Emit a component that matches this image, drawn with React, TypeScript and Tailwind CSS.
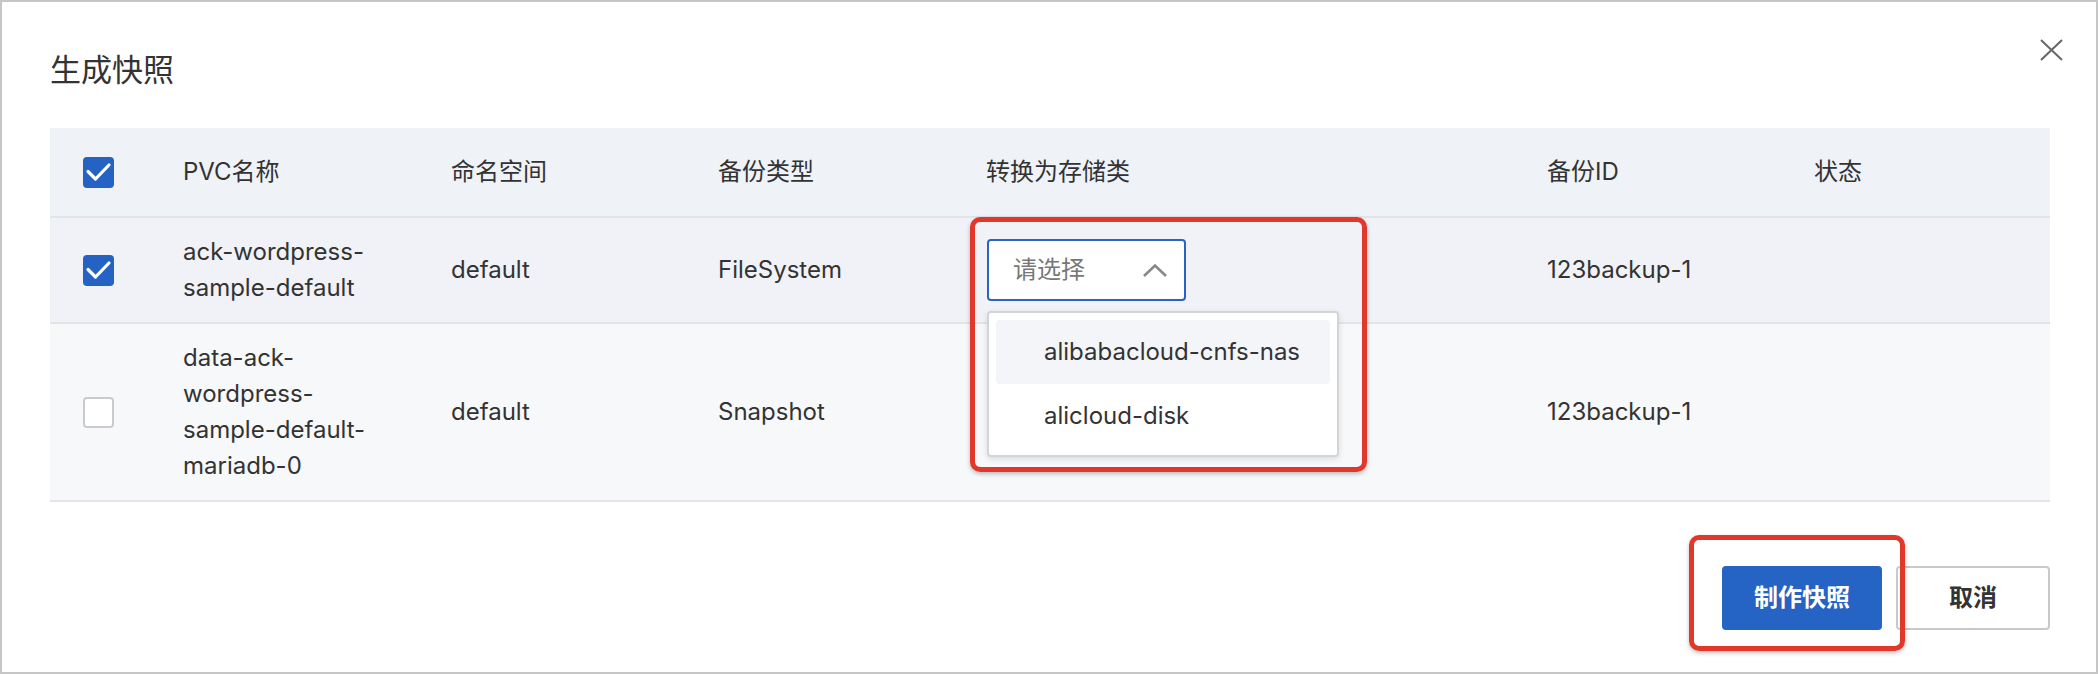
import React from 'react';

// Table rows for the snapshot dialog
interface PvcRow {
  name: string;
  namespace: string;
  type: string;
  backupId: string;
  checked: boolean;
}

const rows: PvcRow[] = [
  { name: 'ack-wordpress-sample-default', namespace: 'default', type: 'FileSystem', backupId: '123backup-1', checked: true },
  { name: 'data-ack-wordpress-sample-default-mariadb-0', namespace: 'default', type: 'Snapshot', backupId: '123backup-1', checked: false },
];

const gridCols = 'grid grid-cols-[133px_268px_267px_268px_561px_267px_236px]';

const Checkbox: React.FC<{ checked: boolean }> = ({ checked }) =>
  checked ? (
    <div className="w-[31px] h-[31px] rounded-[4px] bg-[#2462c4] flex items-center justify-center">
      <svg width="31" height="31" viewBox="0 0 31 31" fill="none">
        <path d="M5 14.5 L12.5 22 L26 8" stroke="white" strokeWidth="3.2" strokeLinecap="round" strokeLinejoin="round" />
      </svg>
    </div>
  ) : (
    <div className="w-[31px] h-[31px] rounded-[4px] border-2 border-[#c9cbd0] bg-white" />
  );

const App: React.FC = () => {
  return (
    <div
      className="relative w-[2098px] h-[674px] bg-white border-2 border-[#c6c6c6] pt-[48px] pl-[48px] pr-[46px] text-[#333]"
      style={{ fontFamily: 'Inter, "Noto Sans CJK SC", sans-serif' }}
    >
      <h1 className="text-[31px] leading-[40px] font-normal text-[#333]">生成快照</h1>

      <svg className="absolute left-[2037px] top-[36px]" width="25" height="24" viewBox="0 0 25 24" fill="none">
        <path d="M2 2 L23 22 M23 2 L2 22" stroke="#666" strokeWidth="2" />
      </svg>

      {/* table */}
      <div className="mt-[38px] text-[24px]">
        <div className={`${gridCols} h-[90px] bg-[#eff2f7] border-b-2 border-[#e2e4e8] items-center`}>
          <div className="pl-[33px] flex items-center"><Checkbox checked /></div>
          <div>PVC名称</div>
          <div>命名空间</div>
          <div>备份类型</div>
          <div>转换为存储类</div>
          <div>备份ID</div>
          <div>状态</div>
        </div>

        {rows.map((row, index) => (
          <div
            key={index}
            className={`${gridCols} py-[16px] leading-[36px] border-b-2 border-[#e2e4e8] items-center ${index === 0 ? 'bg-[#f0f2f7]' : 'bg-[#f7f8fa]'}`}
          >
            <div className="pl-[33px] flex items-center"><Checkbox checked={row.checked} /></div>
            <div className="w-[215px]">{row.name}</div>
            <div>{row.namespace}</div>
            <div>{row.type}</div>
            <div>
              {index === 0 && (
                <div className="relative ml-[1px] w-[199px] h-[62px]">
                  <div className="w-full h-full bg-white border-2 border-[#2a63c3] rounded-[4px] flex items-center justify-between pl-[24px] pr-[16px]">
                    <span className="text-[#777]">请选择</span>
                    <svg width="26" height="15" viewBox="0 0 26 15" fill="none">
                      <path d="M2 13 L13 2.5 L24 13" stroke="#888" strokeWidth="2.6" />
                    </svg>
                  </div>
                  <div className="absolute z-10 left-0 top-[72px] w-[352px] h-[146px] bg-white border-2 border-[#d3d4d6] rounded-[4px] shadow-[0_2px_6px_rgba(0,0,0,0.12)] p-[7px]">
                    <div className="h-[64px] rounded-[4px] bg-[#f4f5f8] flex items-center pl-[48px] text-[#333]">alibabacloud-cnfs-nas</div>
                    <div className="h-[64px] flex items-center pl-[48px] text-[#333]">alicloud-disk</div>
                  </div>
                </div>
              )}
            </div>
            <div>{row.backupId}</div>
            <div></div>
          </div>
        ))}
      </div>

      {/* footer */}
      <div className="mt-[64px] flex justify-end gap-[14px]">
        <button className="w-[160px] h-[64px] rounded-[4px] bg-[#2564c4] text-white text-[24px] font-bold">制作快照</button>
        <button className="w-[154px] h-[64px] rounded-[4px] border-2 border-[#c8c9cc] bg-white text-[#333] text-[24px] font-bold">取消</button>
      </div>

      {/* red annotation boxes */}
      <div className="absolute left-[968px] top-[215px] w-[397px] h-[255px] border-[5px] border-[#e2382c] rounded-[10px] shadow-[0_2px_4px_rgba(0,0,0,0.25)] z-20 pointer-events-none" />
      <div className="absolute left-[1687px] top-[533px] w-[216px] h-[116px] border-[5px] border-[#e2382c] rounded-[10px] shadow-[0_2px_4px_rgba(0,0,0,0.25)] z-20 pointer-events-none" />
    </div>
  );
};

export default App;
